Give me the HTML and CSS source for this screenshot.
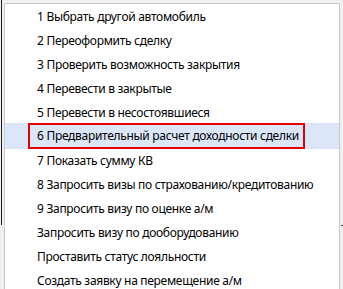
FILE: index.html
```html
<!DOCTYPE html>
<html lang="ru">

<head>
  <meta charset="UTF-8">
  <title>Menu</title>
  <link rel="stylesheet" href="styles.css">
</head>

<body>
  <div class="screen">
    <div class="window-edge"></div>
    <ul class="context-menu">
      <li>1 Выбрать другой автомобиль</li>
      <li>2 Переоформить сделку</li>
      <li>3 Проверить возможность закрытия</li>
      <li>4 Перевести в закрытые</li>
      <li>5 Перевести в несостоявшиеся</li>
      <li class="active"><span class="marked">6 Предварительный расчет доходности сделки</span></li>
      <li>7 Показать сумму КВ</li>
      <li>8 Запросить визы по страхованию/кредитованию</li>
      <li>9 Запросить визу по оценке а/м</li>
      <li>Запросить визу по дооборудованию</li>
      <li>Проставить статус лояльности</li>
      <li>Создать заявку на перемещение а/м</li>
    </ul>
    <div class="edge-tick"></div>
  </div>
</body>

</html>
```

FILE: styles.css
```css
body {
  margin: 0;
  background-color: #f0f0f0;
  font-family: "Noto Sans", Arial, sans-serif;
  font-size: 12px;
  letter-spacing: -0.3px;
  color: #000;
  overflow: hidden;
}

.screen {
  position: relative;
  display: flex;
  align-items: flex-start;
  height: 289px;
}

.window-edge {
  width: 1px;
  height: 225px;
  margin-left: 1px;
  background-color: #1a1a1a;
}

.context-menu {
  list-style: none;
  margin: 3px 0 0 2px;
  padding: 1px 0 0;
  width: 334px;
  background-color: #fff;
  border: 1px solid #c8c8c8;
  border-bottom: none;
}

.context-menu li {
  height: 24px;
  line-height: 24px;
  padding-left: 32px;
  white-space: nowrap;
}

.context-menu li.active {
  background-color: #dbe7f8;
  box-shadow: 0 -2px 0 #dbe7f8;
}

.marked {
  display: inline-block;
  vertical-align: top;
  margin: -2px 0 0 -9px;
  padding: 0 4px 0 7px;
  height: 22px;
  line-height: 22px;
  border: 2px solid #e50000;
}

.edge-tick {
  position: absolute;
  top: 225px;
  left: 341px;
  width: 2px;
  height: 1px;
  background-color: #333;
}
```
